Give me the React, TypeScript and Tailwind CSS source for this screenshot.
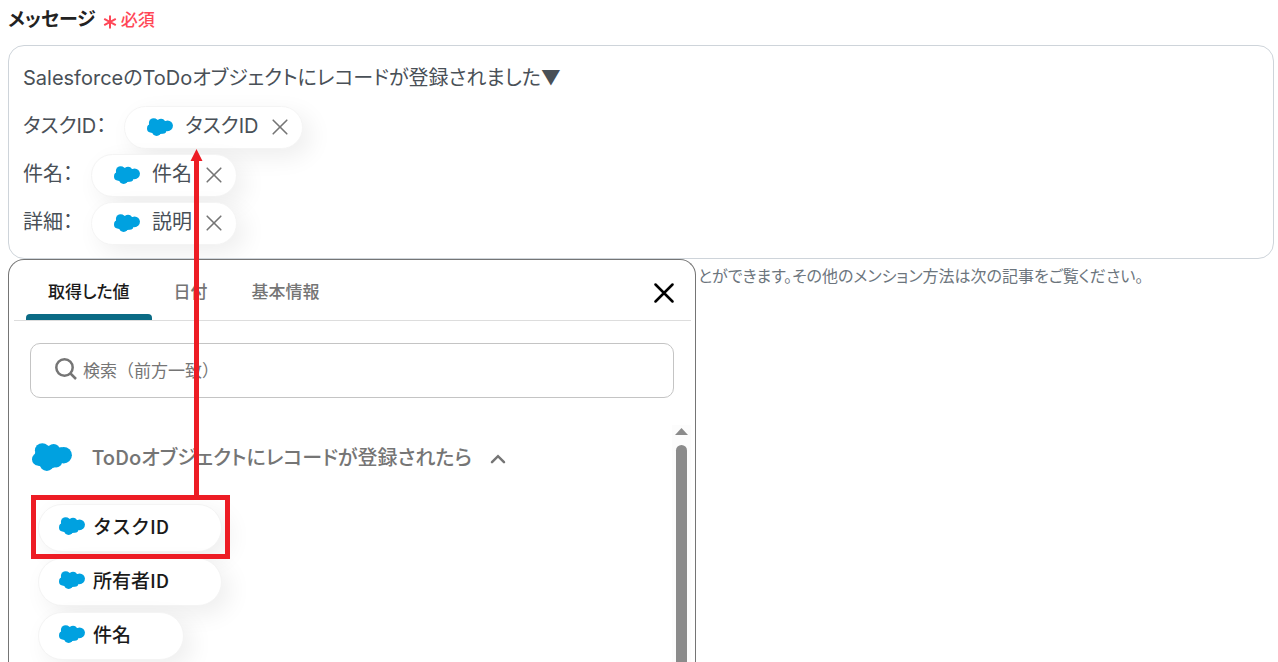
import { ReactNode } from "react";

function SalesforceCloud({ className }: { className: string }) {
  return (
    <svg viewBox="0 0 40 28" preserveAspectRatio="none" fill="#00a1e0" className={className} aria-hidden="true">
      <circle cx="10.3" cy="7.6" r="7.4" />
      <circle cx="21.6" cy="7.4" r="6.4" />
      <circle cx="31.6" cy="12.2" r="8.3" />
      <circle cx="6.3" cy="16.2" r="6.3" />
      <circle cx="14.8" cy="20.6" r="7.3" />
      <circle cx="24" cy="18.4" r="6.2" />
      <path d="M2.6 11.2L4 8l11.5-5h3l8 1.5 3.5 0 3 8-5 8.5-2.5 2-4.5 2-14-2-4-2z" />
    </svg>
  );
}

function CrossIcon({ className, width }: { className: string; width: number }) {
  return (
    <svg viewBox="0 0 20 20" fill="none" stroke="currentColor" strokeWidth={width} strokeLinecap="round" className={className} aria-hidden="true">
      <path d="M1.5 1.5l17 17M18.5 1.5l-17 17" />
    </svg>
  );
}

function MessageRow({ label, value }: { label: string; value: string }) {
  return (
    <div className="flex h-12 items-center">
      <span>{label}：</span>
      <span className="mt-0.5 ml-[18px] flex h-[43px] items-center rounded-full border border-[#f4f4f4] bg-white pr-3.5 pl-[22px] shadow-[8px_8px_24px_rgba(0,0,0,0.07)]">
        <SalesforceCloud className="mr-3 h-[18px] w-[26px]" />
        <span className="mb-0.5">{value}</span>
        <button type="button" aria-label={`${value}を削除`} className="ml-3.5 text-[#757575]">
          <CrossIcon className="size-4" width={2} />
        </button>
      </span>
    </div>
  );
}

function Tab({ active, children }: { active?: boolean; children: ReactNode }) {
  return (
    <button
      type="button"
      role="tab"
      aria-selected={!!active}
      className={
        active
          ? "relative px-[22px] pt-0.5 text-[17px] font-medium text-[#1a1a1a] after:absolute after:inset-x-0 after:bottom-0 after:h-1.5 after:rounded-t after:bg-[#0b6b85]"
          : "px-[22px] pt-0.5 text-[17px] font-medium text-[#757575]"
      }
    >
      {children}
    </button>
  );
}

// Red frame around the picked item, with an arrow up to where it lands
function PickMarker() {
  return (
    <span className="pointer-events-none absolute -top-[9px] -right-2 -bottom-[7px] -left-[7px] z-10 border-5 border-[#ed1c24]">
      <svg viewBox="0 0 13 351" fill="#ed1c24" className="absolute bottom-full left-[154px] h-[351px] w-[13px]" aria-hidden="true">
        <path d="M6.5 0L12.5 12H9V351H4V12H.5z" />
      </svg>
    </span>
  );
}

const items = ["タスクID", "所有者ID", "件名"];

export default function App() {
  return (
    <main className="flex h-screen flex-col overflow-hidden bg-white pr-1 pl-2 font-['Noto_Sans_CJK_JP',sans-serif] [font-feature-settings:'palt']">
      <div className="flex h-[45px] shrink-0 items-center pb-2">
        <label id="message-label" className="text-[19px] font-bold text-[#222]">メッセージ</label>
        <svg viewBox="0 0 14 14" fill="none" stroke="#ff4757" strokeWidth="2" className="mt-1.5 ml-[7px] size-3.5" aria-hidden="true">
          <path d="M7 .5v13M1.2 3.8l11.6 6.4M12.8 3.8L1.2 10.2" />
        </svg>
        <span className="ml-1 text-[17px] font-medium text-[#ff4757]">必須</span>
      </div>

      <div
        role="textbox"
        aria-multiline="true"
        aria-labelledby="message-label"
        className="shrink-0 overflow-hidden rounded-2xl border border-[#ced4da] px-3.5 pt-2 pb-3 font-['Inter','Noto_Sans_CJK_JP',sans-serif] text-[20px] text-[#495057]"
      >
        <p className="flex h-12 items-center">SalesforceのToDoオブジェクトにレコードが登録されました▼</p>
        <MessageRow label="タスクID" value="タスクID" />
        <MessageRow label="件名" value="件名" />
        <MessageRow label="詳細" value="説明" />
      </div>

      <div className="flex min-h-0 flex-1">
        <section className="flex w-[688px] shrink-0 flex-col rounded-t-2xl border border-b-0 border-[#757575] bg-white">
          <div className="mr-1 ml-[5px] flex h-[61px] shrink-0 border-b border-[#ddd] pl-3">
            <div role="tablist" className="flex flex-1">
              <Tab active>取得した値</Tab>
              <Tab>日付</Tab>
              <Tab>基本情報</Tab>
            </div>
            <button type="button" aria-label="閉じる" className="mt-1.5 mr-[17px] text-black">
              <CrossIcon className="size-5" width={2.5} />
            </button>
          </div>

          <div className="mx-[21px] mt-[22px] flex h-[55px] shrink-0 items-center rounded-[10px] border border-[#c4c4c4] pl-6">
            <svg viewBox="0 0 22 22" fill="none" stroke="#757575" strokeWidth="2.5" className="mb-1 size-[22px]" aria-hidden="true">
              <circle cx="9.5" cy="9.5" r="8.2" />
              <path d="M15.5 15.5l5.5 5.5" />
            </svg>
            <input
              type="search"
              aria-label="検索"
              placeholder="検索（前方一致）"
              className="ml-1.5 flex-1 pb-0.5 text-[17px] outline-none [font-feature-settings:normal] placeholder:text-[#757575]"
            />
          </div>

          <div className="mt-[27px] mr-1 flex min-h-0 flex-1 pl-[23px]">
            <div className="flex-1 pt-3">
              <button type="button" className="flex h-10 items-center text-[20px] font-medium text-[#757575]">
                <SalesforceCloud className="h-7 w-10" />
                <span className="ml-5">ToDoオブジェクトにレコードが登録されたら</span>
                <svg viewBox="0 0 16 10" fill="none" stroke="currentColor" strokeWidth="2.5" strokeLinecap="round" className="mt-1 ml-[18px] h-2.5 w-4" aria-hidden="true">
                  <path d="M2 8.2l6-6 6 6" />
                </svg>
              </button>
              <ul className="mt-[27px] ml-1.5 flex flex-col items-start gap-1.5 [font-feature-settings:normal]">
                {items.map((item, i) => (
                  <li key={item} className="relative">
                    <button
                      type="button"
                      className="flex h-12 items-center gap-2 rounded-full border border-[#f4f4f4] bg-white pr-[52px] pb-1 pl-5 text-[19px] font-medium text-[#1a1a1a] shadow-[8px_8px_24px_rgba(0,0,0,0.07)]"
                    >
                      <SalesforceCloud className="h-[18px] w-[26px]" />
                      {item}
                    </button>
                    {i === 0 && <PickMarker />}
                  </li>
                ))}
              </ul>
            </div>
            <div className="flex w-[19px] flex-col items-center bg-[#fcfcfc]" aria-hidden="true">
              <svg viewBox="0 0 13 7" fill="#8b8b8b" className="mt-[3px] h-[7px] w-[13px]">
                <path d="M6.5 0L13 7H0z" />
              </svg>
              <div className="mt-2.5 w-[11px] flex-1 rounded-t-full bg-[#8b8b8b]" />
            </div>
          </div>
        </section>
        <p className="mt-1 ml-0.5 text-base text-[#6c757d]">とができます。その他のメンション方法は次の記事をご覧ください。</p>
      </div>
    </main>
  );
}
